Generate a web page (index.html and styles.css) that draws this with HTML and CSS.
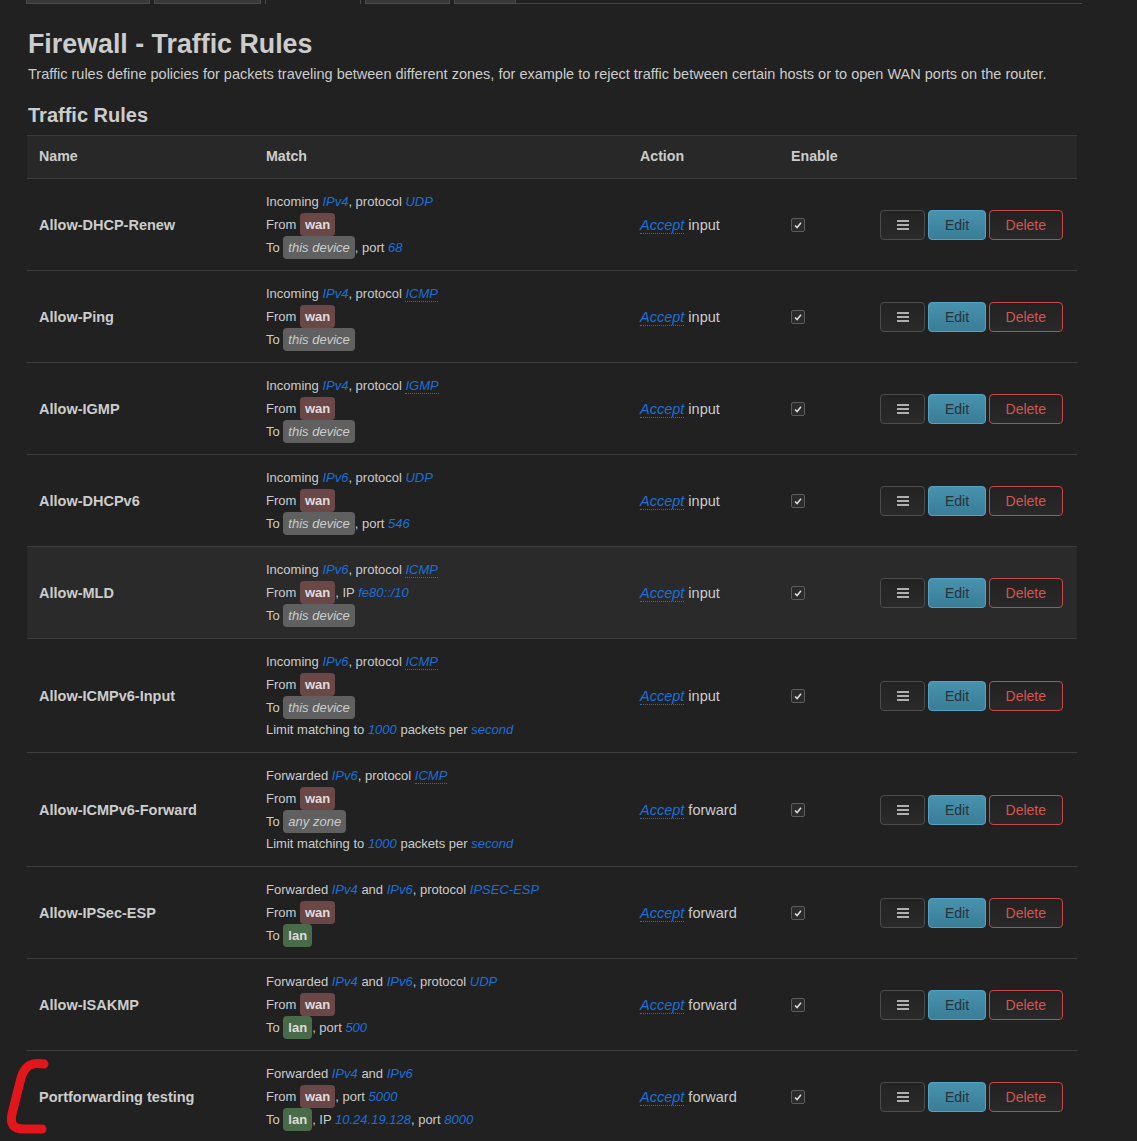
FILE: index.html
```html
<!DOCTYPE html>
<html lang="en">
<head>
    <meta charset="UTF-8">
    <title>Firewall - Traffic Rules</title>
    <link rel="stylesheet" href="styles.css">
</head>
<body>
    <!-- tab strip, only the bottom edge is visible -->
    <ul class="tabs">
        <li class="tab-general"></li>
        <li class="tab-forwards"></li>
        <li class="tab-rules active"></li>
        <li class="tab-nat"></li>
        <li class="tab-ipsets"></li>
        <li class="rest"></li>
    </ul>

    <div class="page">
        <h2>Firewall - Traffic Rules</h2>
        <p class="desc">Traffic rules define policies for packets traveling between different zones, for example to reject traffic between certain hosts or to open WAN ports on the router.</p>
        <h3>Traffic Rules</h3>

        <table class="rules">
            <colgroup>
                <col class="c-name"><col class="c-match"><col class="c-action"><col class="c-enable"><col class="c-btns">
            </colgroup>
            <thead>
                <tr><th>Name</th><th>Match</th><th>Action</th><th>Enable</th><th></th></tr>
            </thead>
            <tbody>
                <tr>
                    <td class="name">Allow-DHCP-Renew</td>
                    <td class="match">
                        <div>Incoming <i class="v">IPv4</i>, protocol <i class="v">UDP</i></div>
                        <div>From <span class="zone wan">wan</span></div>
                        <div>To <span class="zone dev">this device</span>, port <i class="v">68</i></div>
                    </td>
                    <td class="action"><i class="v abbr">Accept</i> input</td>
                    <td><span class="check"><svg viewBox="0 0 14 14"><polyline points="3.5,7.5 6,10 10.5,4.5"/></svg></span></td>
                    <td class="btns"><button class="btn more"><svg viewBox="0 0 12 10"><path d="M0 1h12M0 5h12M0 9h12"/></svg></button><button class="btn edit">Edit</button><button class="btn del">Delete</button></td>
                </tr>
                <tr>
                    <td class="name">Allow-Ping</td>
                    <td class="match">
                        <div>Incoming <i class="v">IPv4</i>, protocol <i class="v abbr">ICMP</i></div>
                        <div>From <span class="zone wan">wan</span></div>
                        <div>To <span class="zone dev">this device</span></div>
                    </td>
                    <td class="action"><i class="v abbr">Accept</i> input</td>
                    <td><span class="check"><svg viewBox="0 0 14 14"><polyline points="3.5,7.5 6,10 10.5,4.5"/></svg></span></td>
                    <td class="btns"><button class="btn more"><svg viewBox="0 0 12 10"><path d="M0 1h12M0 5h12M0 9h12"/></svg></button><button class="btn edit">Edit</button><button class="btn del">Delete</button></td>
                </tr>
                <tr>
                    <td class="name">Allow-IGMP</td>
                    <td class="match">
                        <div>Incoming <i class="v">IPv4</i>, protocol <i class="v abbr">IGMP</i></div>
                        <div>From <span class="zone wan">wan</span></div>
                        <div>To <span class="zone dev">this device</span></div>
                    </td>
                    <td class="action"><i class="v abbr">Accept</i> input</td>
                    <td><span class="check"><svg viewBox="0 0 14 14"><polyline points="3.5,7.5 6,10 10.5,4.5"/></svg></span></td>
                    <td class="btns"><button class="btn more"><svg viewBox="0 0 12 10"><path d="M0 1h12M0 5h12M0 9h12"/></svg></button><button class="btn edit">Edit</button><button class="btn del">Delete</button></td>
                </tr>
                <tr>
                    <td class="name">Allow-DHCPv6</td>
                    <td class="match">
                        <div>Incoming <i class="v">IPv6</i>, protocol <i class="v">UDP</i></div>
                        <div>From <span class="zone wan">wan</span></div>
                        <div>To <span class="zone dev">this device</span>, port <i class="v">546</i></div>
                    </td>
                    <td class="action"><i class="v abbr">Accept</i> input</td>
                    <td><span class="check"><svg viewBox="0 0 14 14"><polyline points="3.5,7.5 6,10 10.5,4.5"/></svg></span></td>
                    <td class="btns"><button class="btn more"><svg viewBox="0 0 12 10"><path d="M0 1h12M0 5h12M0 9h12"/></svg></button><button class="btn edit">Edit</button><button class="btn del">Delete</button></td>
                </tr>
                <tr class="hover">
                    <td class="name">Allow-MLD</td>
                    <td class="match">
                        <div>Incoming <i class="v">IPv6</i>, protocol <i class="v abbr">ICMP</i></div>
                        <div>From <span class="zone wan">wan</span>, IP <i class="v">fe80::/10</i></div>
                        <div>To <span class="zone dev">this device</span></div>
                    </td>
                    <td class="action"><i class="v abbr">Accept</i> input</td>
                    <td><span class="check"><svg viewBox="0 0 14 14"><polyline points="3.5,7.5 6,10 10.5,4.5"/></svg></span></td>
                    <td class="btns"><button class="btn more"><svg viewBox="0 0 12 10"><path d="M0 1h12M0 5h12M0 9h12"/></svg></button><button class="btn edit">Edit</button><button class="btn del">Delete</button></td>
                </tr>
                <tr>
                    <td class="name">Allow-ICMPv6-Input</td>
                    <td class="match">
                        <div>Incoming <i class="v">IPv6</i>, protocol <i class="v abbr">ICMP</i></div>
                        <div>From <span class="zone wan">wan</span></div>
                        <div>To <span class="zone dev">this device</span></div>
                        <div>Limit matching to <i class="v">1000</i> packets per <i class="v">second</i></div>
                    </td>
                    <td class="action"><i class="v abbr">Accept</i> input</td>
                    <td><span class="check"><svg viewBox="0 0 14 14"><polyline points="3.5,7.5 6,10 10.5,4.5"/></svg></span></td>
                    <td class="btns"><button class="btn more"><svg viewBox="0 0 12 10"><path d="M0 1h12M0 5h12M0 9h12"/></svg></button><button class="btn edit">Edit</button><button class="btn del">Delete</button></td>
                </tr>
                <tr>
                    <td class="name">Allow-ICMPv6-Forward</td>
                    <td class="match">
                        <div>Forwarded <i class="v">IPv6</i>, protocol <i class="v abbr">ICMP</i></div>
                        <div>From <span class="zone wan">wan</span></div>
                        <div>To <span class="zone dev">any zone</span></div>
                        <div>Limit matching to <i class="v">1000</i> packets per <i class="v">second</i></div>
                    </td>
                    <td class="action"><i class="v abbr">Accept</i> forward</td>
                    <td><span class="check"><svg viewBox="0 0 14 14"><polyline points="3.5,7.5 6,10 10.5,4.5"/></svg></span></td>
                    <td class="btns"><button class="btn more"><svg viewBox="0 0 12 10"><path d="M0 1h12M0 5h12M0 9h12"/></svg></button><button class="btn edit">Edit</button><button class="btn del">Delete</button></td>
                </tr>
                <tr>
                    <td class="name">Allow-IPSec-ESP</td>
                    <td class="match">
                        <div>Forwarded <i class="v">IPv4</i> and <i class="v">IPv6</i>, protocol <i class="v">IPSEC-ESP</i></div>
                        <div>From <span class="zone wan">wan</span></div>
                        <div>To <span class="zone lan">lan</span></div>
                    </td>
                    <td class="action"><i class="v abbr">Accept</i> forward</td>
                    <td><span class="check"><svg viewBox="0 0 14 14"><polyline points="3.5,7.5 6,10 10.5,4.5"/></svg></span></td>
                    <td class="btns"><button class="btn more"><svg viewBox="0 0 12 10"><path d="M0 1h12M0 5h12M0 9h12"/></svg></button><button class="btn edit">Edit</button><button class="btn del">Delete</button></td>
                </tr>
                <tr>
                    <td class="name">Allow-ISAKMP</td>
                    <td class="match">
                        <div>Forwarded <i class="v">IPv4</i> and <i class="v">IPv6</i>, protocol <i class="v">UDP</i></div>
                        <div>From <span class="zone wan">wan</span></div>
                        <div>To <span class="zone lan">lan</span>, port <i class="v">500</i></div>
                    </td>
                    <td class="action"><i class="v abbr">Accept</i> forward</td>
                    <td><span class="check"><svg viewBox="0 0 14 14"><polyline points="3.5,7.5 6,10 10.5,4.5"/></svg></span></td>
                    <td class="btns"><button class="btn more"><svg viewBox="0 0 12 10"><path d="M0 1h12M0 5h12M0 9h12"/></svg></button><button class="btn edit">Edit</button><button class="btn del">Delete</button></td>
                </tr>
                <tr>
                    <td class="name marked">
                        <svg class="mark" viewBox="0 0 55 85"><path d="M44 10 C32 8 25 11 21 24 L12 60 C10 70 13 75 24 75 L42 75"/></svg>
                        Portforwarding testing
                    </td>
                    <td class="match">
                        <div>Forwarded <i class="v">IPv4</i> and <i class="v">IPv6</i></div>
                        <div>From <span class="zone wan">wan</span>, port <i class="v">5000</i></div>
                        <div>To <span class="zone lan">lan</span>, IP <i class="v">10.24.19.128</i>, port <i class="v">8000</i></div>
                    </td>
                    <td class="action"><i class="v abbr">Accept</i> forward</td>
                    <td><span class="check"><svg viewBox="0 0 14 14"><polyline points="3.5,7.5 6,10 10.5,4.5"/></svg></span></td>
                    <td class="btns"><button class="btn more"><svg viewBox="0 0 12 10"><path d="M0 1h12M0 5h12M0 9h12"/></svg></button><button class="btn edit">Edit</button><button class="btn del">Delete</button></td>
                </tr>
            </tbody>
        </table>
    </div>
</body>
</html>
```

FILE: styles.css
```css
body {
    margin: 0;
    background: #212121;
    color: #ccc;
    font-family: "Liberation Sans", Arial, sans-serif;
    font-size: 14px;
}

/* tab strip */
.tabs {
    list-style: none;
    margin: 0;
    padding: 0 0 0 26px;
    width: 1056px;
    height: 4px;
    overflow: hidden;
    display: flex;
    align-items: flex-end;
    gap: 4px;
}
.tabs li {
    box-sizing: border-box;
    height: 30px;
    border: 1px solid #4a4a4a;
    background: linear-gradient(#2c2c2c, #3a3a3a);
}
.tabs .tab-general { width: 124px; }
.tabs .tab-forwards { width: 107px; }
.tabs .tab-rules { width: 96px; }
.tabs .tab-nat { width: 85px; }
.tabs .tab-ipsets { width: 62px; }
.tabs li.active {
    border-bottom: none;
    background: #212121;
}
.tabs li.rest {
    flex: 1;
    border: none;
    border-bottom: 1px solid #444;
    background: none;
    margin-left: -4px;
}

.page {
    padding: 0 0 0 27px;
}
h2 {
    margin: 25px 0 0 1px;
    font-size: 26.8px;
    line-height: 30px;
    color: #ccc;
}
.desc {
    margin: 5px 0 0 1px;
    font-size: 14.5px;
    line-height: 20px;
}
h3 {
    margin: 19px 0 0 1px;
    font-size: 20px;
    line-height: 24px;
    color: #ccc;
}

.rules {
    width: 1050px;
    margin-top: 8px;
    border-collapse: collapse;
    table-layout: fixed;
}
.c-name { width: 227px; }
.c-match { width: 374px; }
.c-action { width: 151px; }
.c-enable { width: 89px; }
.c-btns { width: 209px; }

.rules th {
    text-align: left;
    padding: 10px 12px 12px;
    line-height: 20px;
    font-size: 14.2px;
    background: #282828;
    border-top: 1px solid #3a3a3a;
    border-bottom: 1px solid #3d3d3d;
}
.rules td {
    padding: 12px 12px 11px;
    vertical-align: middle;
    border-bottom: 1px solid #3d3d3d;
    line-height: 20px;
}
.rules tr.hover td {
    background: #2a2a2a;
}
.rules td.name {
    font-weight: bold;
    font-size: 14.5px;
}
.rules td.action {
    font-size: 14.5px;
}
.rules td.marked {
    position: relative;
}
.match {
    font-size: 13px;
}
.match div {
    line-height: 22px;
}

.v {
    color: #1b6fdc;
}
.abbr {
    border-bottom: 1px dotted #1b6fdc;
}

.zone {
    display: inline-block;
    padding: 2px 5px;
    line-height: 19px;
    border-radius: 4px;
}
.zone.wan {
    background: #6c4747;
    color: #ddd;
    font-weight: bold;
}
.zone.lan {
    background: #4a6b4a;
    color: #ddd;
    font-weight: bold;
}
.zone.dev {
    background: #606060;
    color: #ccc;
    font-style: italic;
}

.check {
    display: inline-block;
    width: 12px;
    height: 12px;
    border: 1px solid #5c5c5c;
    border-radius: 2px;
    background: #2b2b2b;
    vertical-align: middle;
    margin-top: -2px;
}
.check svg {
    display: block;
    width: 12px;
    height: 12px;
    fill: none;
    stroke: #ddd;
    stroke-width: 1.8;
}

.btns {
    text-align: right;
    white-space: nowrap;
}
.rules td.btns {
    padding-right: 14px;
    padding-left: 0;
}
.btn {
    height: 30px;
    padding: 0 15.5px;
    border-radius: 4px;
    font-family: "Liberation Sans", Arial, sans-serif;
    font-size: 14px;
    vertical-align: middle;
    cursor: pointer;
}
.btn + .btn {
    margin-left: 3px;
}
.btn.more {
    border: 1px solid #4c4c4c;
    background: linear-gradient(#232323, #2a2a2a);
}
.btn.more svg {
    display: block;
    width: 12px;
    height: 10px;
    stroke: #ddd;
    stroke-width: 1.5;
}
.btn.edit {
    border: 1px solid #55a3c2;
    background: linear-gradient(#4892ad, #3a7d97);
    color: #253238;
}
.btn.del {
    border: 1px solid #c8474a;
    background: linear-gradient(#222, #292929);
    color: #d9534f;
    padding: 0 16px;
}

/* red hand-drawn marker over the last row */
.mark {
    position: absolute;
    left: -27px;
    top: 50%;
    margin-top: -43px;
    width: 55px;
    height: 85px;
    overflow: visible;
    fill: none;
    stroke: #e3171b;
    stroke-width: 9;
    stroke-linecap: round;
    stroke-linejoin: round;
}
```
